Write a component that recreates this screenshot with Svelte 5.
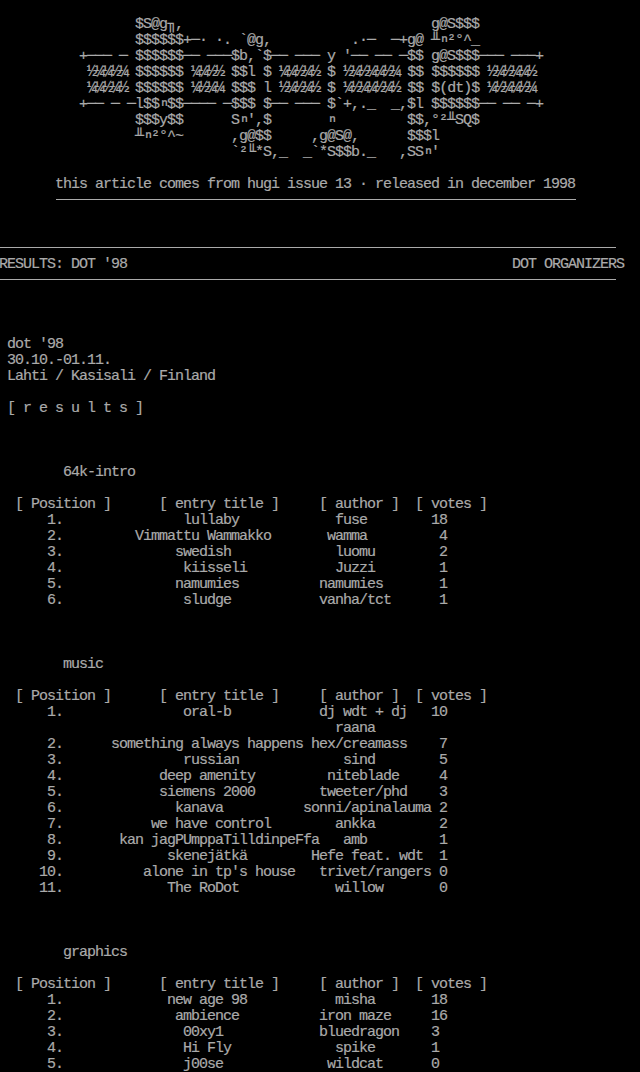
<script>
  // place text fragments at fixed character columns
  function at(...parts) {
    let line = "";
    for (const [col, text] of parts) line = line.padEnd(col) + text;
    return line;
  }

  function row(pos, titleCol, title, authorCol, author, votesCol = null, votes = "") {
    const parts = [];
    if (pos) parts.push([pos.length > 2 ? 5 : 6, pos]);
    if (title) parts.push([titleCol, title]);
    parts.push([authorCol, author]);
    if (votes !== "") parts.push([votesCol, votes]);
    return at(...parts);
  }

  // the fractions and superscript n are too small in this font, so split them out
  function runs(line) {
    return line.split(/([½¼]+|ⁿ)/).filter(Boolean).map((text) => ({
      text,
      kind: text === "ⁿ" ? "sup" : /[½¼]/.test(text) ? "frac" : "",
    }));
  }

  const art = [
    at([17, "$S@g╖,"], [54, "g@S$$$"]),
    at([17, "$$$$$$+─·"], [27, "·."], [30, "`@g,"], [44, ".·─"], [49, "─+g@"], [54, "╨ⁿ²°^_"]),
    at([10, "+───"], [15, "─"], [17, "$$$$$$──"], [26, "───$b,`$──"], [37, "───"], [41, "y"], [43, "'──"], [47, "──"], [50, "─$$"], [54, "g@S$$$───"], [64, "───+"]),
    at([11, "½¼¼½¼"], [17, "$$$$$$"], [24, "¼¼½½"], [29, "$$l"], [33, "$"], [35, "¼¼½¼½"], [41, "$"], [43, "½¼½¼¼½¼"], [51, "$$"], [54, "$$$$$$"], [61, "½¼½¼¼½"]),
    at([11, "¼¼½¼½"], [17, "$$$$$$"], [24, "¼½¼¼"], [29, "$$$"], [33, "l"], [35, "½¼½¼½"], [41, "$"], [43, "¼½¼¼½¼½"], [51, "$$"], [54, "$(dt)$"], [61, "¼½¼¼½¼"]),
    at([10, "+──"], [14, "─"], [16, "─l$$ⁿ$$────"], [28, "─$$$"], [33, "$──"], [37, "───"], [41, "$`+,._"], [49, "_,$l"], [54, "$$$$$$──"], [63, "──"], [66, "─+"]),
    at([17, "$$$y$$"], [29, "Sⁿ',$"], [41, "ⁿ"], [51, "$$,°²╨SQ$"]),
    at([17, "╨ⁿ²°^~"], [29, ",g@$$"], [39, ",g@S@,"], [51, "$$$l"]),
    at([29, "`²╙*S,_"], [38, "_`*S$$b._"], [50, ",SS" + "ⁿ'"]),
  ];

  const head = at([2, "[ Position ]"], [20, "[ entry title ]"], [40, "[ author ]"], [52, "[ votes ]"]);

  const body = [
    " dot '98",
    " 30.10.-01.11.",
    " Lahti / Kasisali / Finland",
    "",
    " [ r e s u l t s ]",
    "",
    "",
    "",
    at([8, "64k-intro"]),
    "",
    head,
    row("1.", 23, "lullaby", 42, "fuse", 54, "18"),
    row("2.", 17, "Vimmattu Wammakko", 41, "wamma", 55, "4"),
    row("3.", 22, "swedish", 42, "luomu", 55, "2"),
    row("4.", 23, "kiisseli", 42, "Juzzi", 55, "1"),
    row("5.", 22, "namumies", 40, "namumies", 55, "1"),
    row("6.", 23, "sludge", 40, "vanha/tct", 55, "1"),
    "",
    "",
    "",
    at([8, "music"]),
    "",
    head,
    row("1.", 23, "oral-b", 40, "dj wdt + dj", 54, "10"),
    row("", 0, "", 42, "raana"),
    row("2.", 14, "something always happens", 39, "hex/creamass", 55, "7"),
    row("3.", 23, "russian", 43, "sind", 55, "5"),
    row("4.", 20, "deep amenity", 41, "niteblade", 55, "4"),
    row("5.", 20, "siemens 2000", 40, "tweeter/phd", 55, "3"),
    row("6.", 22, "kanava", 38, "sonni/apinalauma", 55, "2"),
    row("7.", 19, "we have control", 42, "ankka", 55, "2"),
    row("8.", 15, "kan jagPUmppaTilldinpeFfa", 43, "amb", 55, "1"),
    row("9.", 21, "skenejätkä", 39, "Hefe feat. wdt", 55, "1"),
    row("10.", 18, "alone in tp's house", 40, "trivet/rangers", 55, "0"),
    row("11.", 21, "The RoDot", 42, "willow", 55, "0"),
    "",
    "",
    "",
    at([8, "graphics"]),
    "",
    head,
    row("1.", 21, "new age 98", 42, "misha", 54, "18"),
    row("2.", 22, "ambience", 40, "iron maze", 54, "16"),
    row("3.", 23, "00xy1", 40, "bluedragon", 54, "3"),
    row("4.", 23, "Hi Fly", 42, "spike", 54, "1"),
    row("5.", 23, "j00se", 41, "wildcat", 54, "0"),
  ];
</script>

<div class="screen">
  <header class="art">
    {#each art as line}
      <div class="line">{#each runs(line) as run}<span class={run.kind}>{run.text}</span>{/each}</div>
    {/each}
  </header>

  <p class="note">this article comes from hugi issue 13 · released in december 1998</p>

  <div class="titlebar">
    <div class="titles">
      <h1>RESULTS: DOT '98</h1>
      <span>DOT ORGANIZERS</span>
    </div>
  </div>

  <main class="article">
    {#each body as line}
      <div class="line">{line}</div>
    {/each}
  </main>
</div>

<style>
  :global(body) {
    background: #000;
    overflow: hidden;
  }
  .screen {
    width: 640px;
    height: 1072px;
    overflow: hidden;
    background: #000;
    color: #aaa;
    font-family: "Liberation Mono", monospace;
    font-size: 15px;
    letter-spacing: -1px;
    line-height: 18px;
    text-indent: -1px;
    -webkit-text-stroke: 0.2px #aaa;
  }
  .line {
    height: 16px;
    white-space: pre;
  }
  .frac {
    font-size: 17px;
    letter-spacing: -2.2px;
    line-height: 0;
  }
  .sup {
    font-size: 18px;
    letter-spacing: -2.8px;
    line-height: 0;
    vertical-align: -2px;
  }
  .art {
    padding-top: 16px;
  }
  .note {
    width: 520px;
    height: 16px;
    margin: 16px 0 47px 56px;
    padding-bottom: 7px;
    border-bottom: 1px solid #aaa;
    white-space: pre;
  }
  .titlebar {
    width: 616px;
    padding: 8px 0 7px;
    border-top: 1px solid #aaa;
    border-bottom: 1px solid #aaa;
  }
  .titles {
    display: flex;
    justify-content: space-between;
    height: 16px;
    margin-right: -8px;
    white-space: pre;
  }
  h1 {
    margin: 0;
    font: inherit;
  }
  .article {
    margin-top: 56px;
  }
</style>
